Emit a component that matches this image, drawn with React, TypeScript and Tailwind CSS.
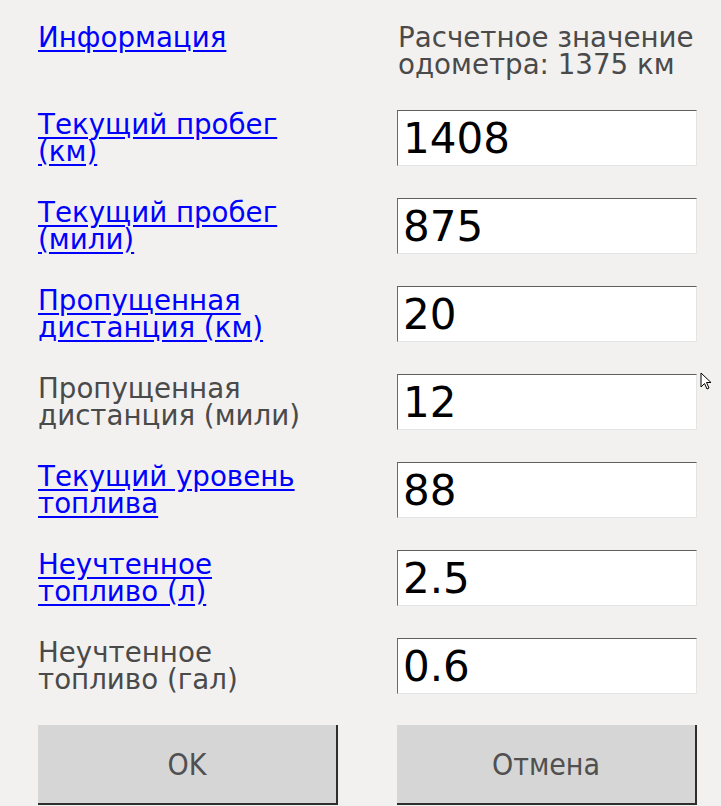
const rows: { label: string; value: string; link: boolean }[] = [
  { label: 'Текущий пробег (км)', value: '1408', link: true },
  { label: 'Текущий пробег (мили)', value: '875', link: true },
  { label: 'Пропущенная дистанция (км)', value: '20', link: true },
  { label: 'Пропущенная дистанция (мили)', value: '12', link: false },
  { label: 'Текущий уровень топлива', value: '88', link: true },
  { label: 'Неучтенное топливо (л)', value: '2.5', link: true },
  { label: 'Неучтенное топливо (гал)', value: '0.6', link: false },
];

const font = { fontFamily: '"DejaVu Sans", sans-serif' };
const condensed = { fontFamily: '"DejaVu Sans Condensed", "DejaVu Sans", sans-serif' };

function Cursor() {
  return (
    <svg
      className="absolute left-[700px] top-[372px]"
      width="14"
      height="20"
      viewBox="0 0 14 20"
    >
      <path
        d="M1 1 L1 15 L4.5 11.5 L7 17 L9 16 L6.5 10.5 L11 10.5 Z"
        fill="white"
        stroke="black"
        strokeWidth="1"
        strokeLinejoin="round"
      />
    </svg>
  );
}

export default function App() {
  return (
    <div
      className="relative w-[721px] h-[806px] bg-[#f2f1f0] overflow-hidden pl-[38px] pt-[24px]"
      style={font}
    >
      <div className="grid grid-cols-[300px_300px] gap-x-[59px]">
        <div className="text-[27.7px] leading-[27px]">
          <a href="#" className="text-[#0000ff] underline underline-offset-[3px]">
            Информация
          </a>
        </div>
        <div className="text-[27.7px] leading-[27px] text-[#4a4a4a] pl-[1px]">
          Расчетное значение одометра: 1375 км
        </div>
      </div>

      <div className="mt-[32px] flex flex-col gap-[32px]">
        {rows.map((r) => (
          <div key={r.label} className="grid grid-cols-[300px_300px] gap-x-[59px] items-center">
            <div className="text-[27.7px] leading-[27px] w-[280px]">
              {r.link ? (
                <a href="#" className="text-[#0000ff] underline underline-offset-[3px]">
                  {r.label}
                </a>
              ) : (
                <span className="text-[#4a4a4a]">{r.label}</span>
              )}
            </div>
            <input
              defaultValue={r.value}
              className="h-[56px] w-[300px] bg-white text-black text-[42px] leading-none pl-[5px] border border-t-[#5f5f5f] border-l-[#6b6b6b] border-r-[#e4e4e4] border-b-[#e4e4e4] outline-none"
              style={font}
            />
          </div>
        ))}
      </div>

      <div className="mt-[31px] grid grid-cols-[300px_300px] gap-x-[59px]">
        <button
          className="h-[80px] bg-[#d6d6d6] text-[#505050] text-[30px] border-r-2 border-b-2 border-[#2e2e2e]"
          style={condensed}
        >
          OK
        </button>
        <button
          className="h-[80px] bg-[#d6d6d6] text-[#505050] text-[30px] border-r-2 border-b-2 border-[#2e2e2e]"
          style={condensed}
        >
          Отмена
        </button>
      </div>

      <Cursor />
    </div>
  );
}
